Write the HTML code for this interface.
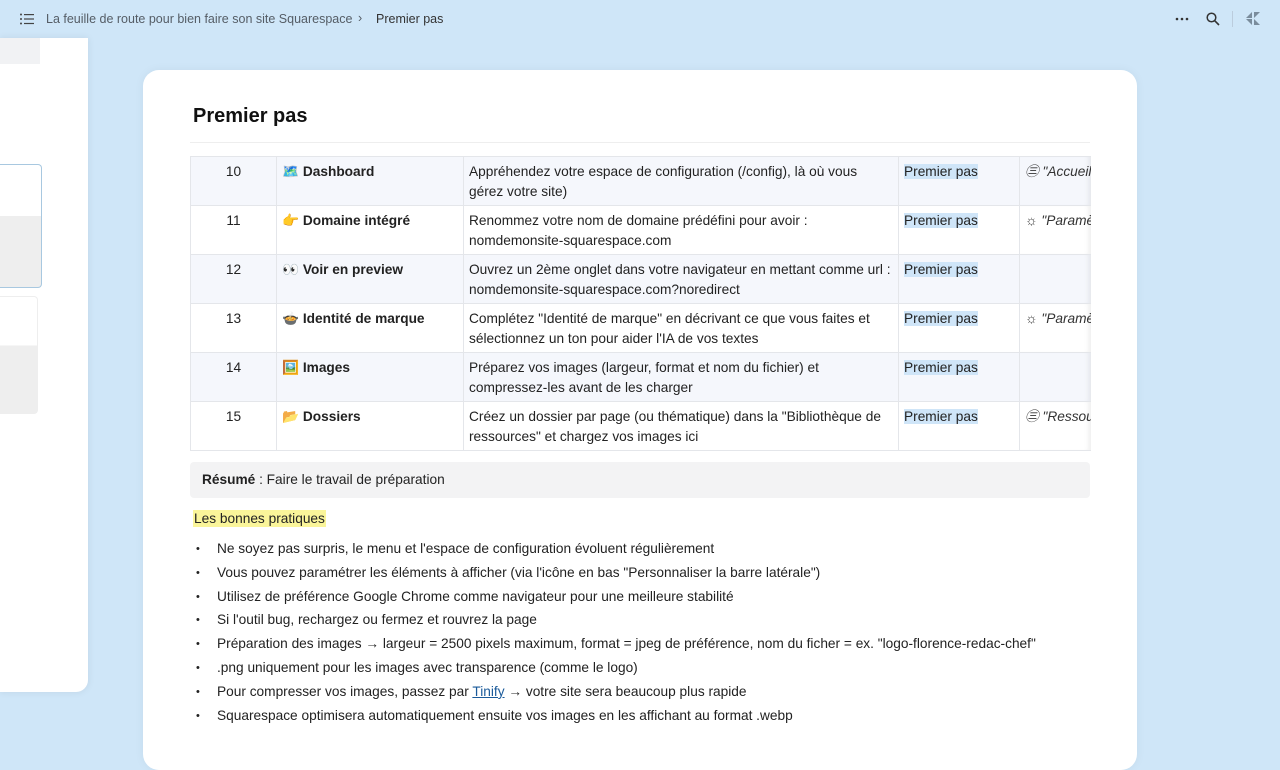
<!DOCTYPE html>
<html><head><meta charset="utf-8"><style>
*{margin:0;padding:0;box-sizing:border-box}
body{width:1280px;height:729px;overflow:hidden;background:#cfe6f8;font-family:"Liberation Sans",sans-serif;color:#222;position:relative}
.top{position:absolute;left:0;top:0;width:1280px;height:38px;font-size:12.5px;color:#555d66}
.left{position:absolute;left:0;top:38px;width:88px;height:654px;background:#fff;border-bottom-right-radius:12px;box-shadow:0 0 8px rgba(0,0,0,.08)}
.card{position:absolute;left:143px;top:70px;width:994px;height:700px;background:#fff;border-radius:16px;box-shadow:0 0 10px rgba(0,0,0,.05)}
h1{position:absolute;left:193px;top:105px;font-size:20px;font-weight:bold;color:#111}
.hr{position:absolute;left:190px;top:142px;width:900px;height:1px;background:#eee}
table{position:absolute;left:190px;top:156px;width:900px;border-collapse:collapse;font-size:13.7px;table-layout:fixed}
td{border:1px solid #e4e6ea;height:49px;vertical-align:top;padding:5px 5px 0;line-height:20px;overflow:hidden;white-space:nowrap}
tr:nth-child(odd) td{background:#f5f7fc}
td.n{text-align:center}
td.b{font-weight:bold}
.hl{background:#cfe5f8}
td.i{font-style:italic;color:#333;border-right:none;box-shadow:inset -6px 0 6px -4px rgba(0,0,0,.08)}
.sum{position:absolute;left:190px;top:462px;width:900px;height:36px;background:#f3f3f4;border-radius:4px;font-size:13.7px;padding:10px 12px;}
.bp{position:absolute;left:193px;top:510px;font-size:13.7px;background:#faf59a;padding:1px 1px}
ul{position:absolute;left:199px;top:539px;list-style:none;font-size:13.7px;color:#222}
li{height:23.8px;line-height:20px;position:relative;padding-left:18px;white-space:nowrap}
li:before{content:"•";position:absolute;left:-3px;font-size:11px}
a{color:#1a5a9a;text-decoration:underline}
</style></head><body>
<div class="top">
<svg style="position:absolute;left:20px;top:13px" width="14" height="12" viewBox="0 0 14 12"><g fill="#444"><circle cx="1" cy="1.5" r="1"/><circle cx="1" cy="6" r="1"/><circle cx="1" cy="10.5" r="1"/><rect x="4" y="1" width="10" height="1.2"/><rect x="4" y="5.4" width="10" height="1.2"/><rect x="4" y="9.9" width="10" height="1.2"/></g></svg>
<span style="position:absolute;left:46px;top:12px">La feuille de route pour bien faire son site Squarespace</span>
<span style="position:absolute;left:358px;top:11px">›</span>
<span style="position:absolute;left:376px;top:12px;color:#333">Premier pas</span>
<svg style="position:absolute;left:1175px;top:17px" width="14" height="4" viewBox="0 0 14 4"><g fill="#333"><circle cx="2" cy="2" r="1.3"/><circle cx="7" cy="2" r="1.3"/><circle cx="12" cy="2" r="1.3"/></g></svg>
<svg style="position:absolute;left:1206px;top:12px" width="14" height="14" viewBox="0 0 14 14"><circle cx="5.5" cy="5.5" r="4.3" fill="none" stroke="#333" stroke-width="1.5"/><path d="M8.7 8.7L13 13" stroke="#333" stroke-width="1.6"/></svg>
<div style="position:absolute;left:1232px;top:11px;width:1px;height:16px;background:#bcd"></div>
<svg style="position:absolute;left:1246px;top:11px" width="14" height="15" viewBox="0 0 14 15"><g fill="#7a8c9c"><path d="M0 7L6 1V7Z"/><path d="M0 8H6V14Z"/><path d="M8 1H14L8 7Z"/><path d="M8 8L14 14H8Z"/></g></svg>
</div>
<div class="left">
<div style="position:absolute;left:0;top:0;width:40px;height:26px;background:#f1f2f4"></div>
<div style="position:absolute;left:0;top:126px;width:42px;height:124px;border:1px solid #a8c8e0;border-left:none;border-radius:0 4px 4px 0;background:linear-gradient(#fff 0,#fff 42%,#eee 42%)"></div>
<div style="position:absolute;left:0;top:258px;width:38px;height:118px;border:1px solid #eee;border-left:none;border-radius:0 4px 4px 0;background:linear-gradient(#fff 0,#fff 42%,#eee 42%)"></div>
</div>
<div class="card"></div>
<h1>Premier pas</h1>
<div class="hr"></div>
<table>
<colgroup><col style="width:86px"><col style="width:187px"><col style="width:435px"><col style="width:121px"><col style="width:71px"></colgroup>
<tr><td class="n">10</td><td class="b">🗺️ Dashboard</td><td>Appréhendez votre espace de configuration (/config), là où vous<br>gérez votre site)</td><td><span class="hl">Premier pas</span></td><td class="i">㊂ "Accueil</td></tr>
<tr><td class="n">11</td><td class="b">👉 Domaine intégré</td><td>Renommez votre nom de domaine prédéfini pour avoir :<br>nomdemonsite-squarespace.com</td><td><span class="hl">Premier pas</span></td><td class="i">☼ "Paramè</td></tr>
<tr><td class="n">12</td><td class="b">👀 Voir en preview</td><td>Ouvrez un 2ème onglet dans votre navigateur en mettant comme url :<br>nomdemonsite-squarespace.com?noredirect</td><td><span class="hl">Premier pas</span></td><td class="i"></td></tr>
<tr><td class="n">13</td><td class="b">🍲 Identité de marque</td><td>Complétez "Identité de marque" en décrivant ce que vous faites et<br>sélectionnez un ton pour aider l'IA de vos textes</td><td><span class="hl">Premier pas</span></td><td class="i">☼ "Paramè</td></tr>
<tr><td class="n">14</td><td class="b">🖼️ Images</td><td>Préparez vos images (largeur, format et nom du fichier) et<br>compressez-les avant de les charger</td><td><span class="hl">Premier pas</span></td><td class="i"></td></tr>
<tr><td class="n">15</td><td class="b">📂 Dossiers</td><td>Créez un dossier par page (ou thématique) dans la "Bibliothèque de<br>ressources" et chargez vos images ici</td><td><span class="hl">Premier pas</span></td><td class="i">㊂ "Ressou</td></tr>
</table>
<div class="sum"><b>Résumé</b> : Faire le travail de préparation</div>
<div class="bp">Les bonnes pratiques</div>
<ul>
<li>Ne soyez pas surpris, le menu et l'espace de configuration évoluent régulièrement</li>
<li>Vous pouvez paramétrer les éléments à afficher (via l'icône en bas "Personnaliser la barre latérale")</li>
<li>Utilisez de préférence Google Chrome comme navigateur pour une meilleure stabilité</li>
<li>Si l'outil bug, rechargez ou fermez et rouvrez la page</li>
<li>Préparation des images → largeur = 2500 pixels maximum, format = jpeg de préférence, nom du ficher = ex. "logo-florence-redac-chef"</li>
<li>.png uniquement pour les images avec transparence (comme le logo)</li>
<li>Pour compresser vos images, passez par <a>Tinify</a> → votre site sera beaucoup plus rapide</li>
<li>Squarespace optimisera automatiquement ensuite vos images en les affichant au format .webp</li>
</ul>
</body></html>
